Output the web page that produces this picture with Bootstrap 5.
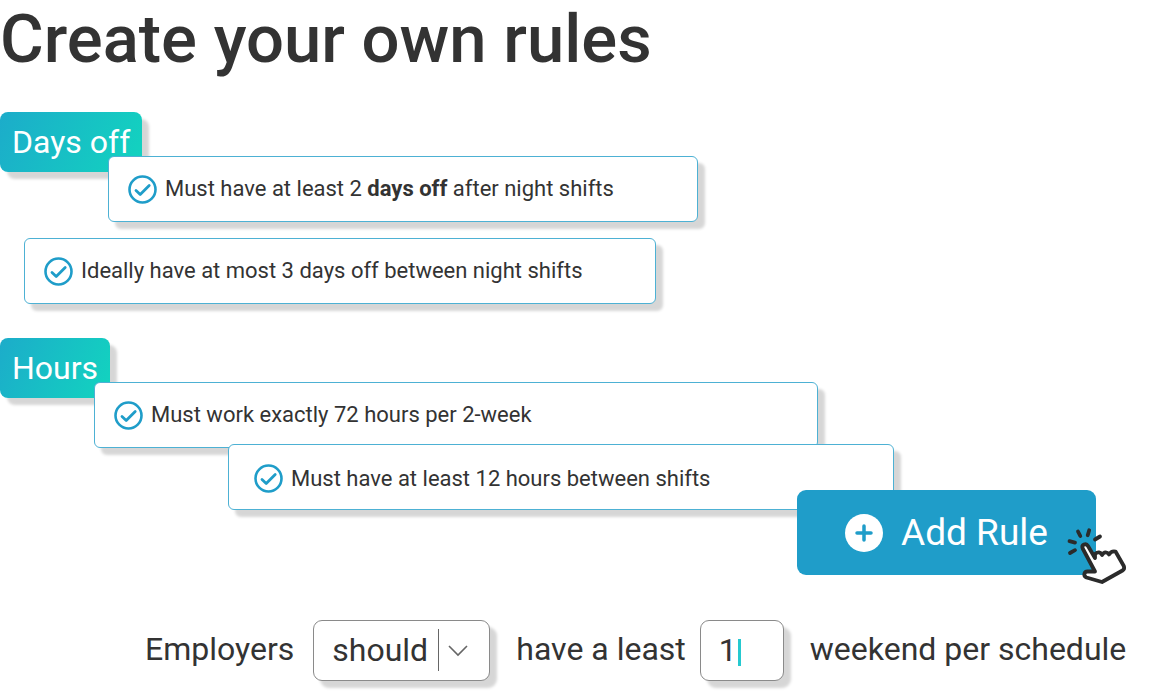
<!DOCTYPE html>
<html lang="en">
<head>
<meta charset="utf-8">
<meta name="viewport" content="width=device-width, initial-scale=1">
<title>Create your own rules</title>
<link href="https://cdn.jsdelivr.net/npm/bootstrap@5.3.0/dist/css/bootstrap.min.css" rel="stylesheet">
<style>
  :root { --ink: #333; --brand: #1f9dc9; --drop: 7px 7px 3px rgba(0, 0, 0, .16); }
  body { font-family: Roboto, "Liberation Sans", sans-serif; color: var(--ink); background: #fff; }
  h1 { font-size: 67px; line-height: 78px; font-weight: 500; margin-bottom: 34px; }
  .rule-group { margin-bottom: 34px; }
  .group-tag { font-size: 32px; line-height: 60px; height: 60px; font-weight: 400; padding: 0 12px; border-radius: 8px; color: #fff;
    background: linear-gradient(115deg, #1cacca, #12d4bf); box-shadow: var(--drop); }
  .rule-card { position: relative; width: 100%; height: 66px; padding: 0 19px; gap: 8px; border: 1px solid #4db1d4; border-radius: 6px;
    background: #fff; box-shadow: var(--drop); font-size: 22px; line-height: 32px; }
  .rule-card svg { flex: none; width: 29px; height: 29px; }
  .tucked { margin-top: -16px; }
  .rule-a { margin-left: 108px; max-width: 590px; }
  .rule-b { margin: 16px 0 0 24px; max-width: 632px; }
  .rule-c { margin-left: 94px; max-width: 724px; }
  .rule-d { margin: -4px 0 0 228px; max-width: 666px; padding: 3px 25px 0; }
  .add-wrap { margin: -20px 65px 0 auto; width: 299px; position: relative; }
  .add-btn, .add-btn:hover { width: 100%; height: 85px; border: 0; border-radius: 9px; background: var(--brand); color: #fff; font-size: 37px; line-height: 48px; font-weight: 400; gap: 18px; }
  .pointer { position: absolute; right: -32px; top: 37px; width: 62px; height: 58px; pointer-events: none; }
  .sentence { margin: 45px 0 11px 145px; font-size: 32px; line-height: 40px; }
  .sentence-text { padding-bottom: 4px; }
  .first-text { margin-right: 19px; }
  .second-text { margin-right: 14px; }
  .field-wrap { position: relative; margin-right: 26px; }
  .field-box { height: 61px; border: 1px solid #8a8a8a; border-radius: 9px; background: #fff; color: var(--ink); box-shadow: var(--drop); appearance: none; padding: 0 18px 2px; }
  .verb { width: 177px; }
  .amount { width: 84px; }
  .verb-arrow { position: absolute; right: 20px; top: 9px; pointer-events: none; }
  .caret { position: absolute; left: 38px; top: 19px; width: 3px; height: 27px; background: #25c9d0; }
</style>
</head>
<body>
<svg class="d-none" xmlns="http://www.w3.org/2000/svg">
  <symbol id="tick" viewBox="0 0 29 29"><g fill="none" stroke="#1f9dc9"><circle cx="14.500" cy="14.500" r="13" stroke-width="2.600"/><path d="M8 15.500l4.200 4 9-9" stroke-width="2.800" stroke-linecap="round" stroke-linejoin="round"/></g></symbol>
</svg>
<main>
  <h1>Create your own rules</h1>
  <section class="rule-group">
    <h2 class="group-tag d-inline-block mb-0 align-top">Days off</h2>
    <div class="rule-card rule-a tucked d-flex align-items-center"><svg aria-hidden="true"><use href="#tick"/></svg><span>Must have at least 2 <b>days off</b> after night shifts</span></div>
    <div class="rule-card rule-b d-flex align-items-center"><svg aria-hidden="true"><use href="#tick"/></svg><span>Ideally have at most 3 days off between night shifts</span></div>
  </section>
  <section>
    <h2 class="group-tag d-inline-block mb-0 align-top">Hours</h2>
    <div class="rule-card rule-c tucked d-flex align-items-center"><svg aria-hidden="true"><use href="#tick"/></svg><span>Must work exactly 72 hours per 2-week</span></div>
    <div class="rule-card rule-d d-flex align-items-center"><svg aria-hidden="true"><use href="#tick"/></svg><span>Must have at least 12 hours between shifts</span></div>
  </section>
  <div class="add-wrap">
    <button type="button" class="btn add-btn d-flex align-items-center justify-content-center">
      <svg width="38" height="38" viewBox="0 0 38 38" aria-hidden="true"><circle cx="19" cy="19" r="19" fill="#fff"/><path d="M19 12v14M12 19h14" stroke="#1f9dc9" stroke-width="3.500" stroke-linecap="round"/></svg>
      Add Rule
    </button>
    <svg class="pointer" viewBox="0 0 62 58" fill="none" stroke="#2b2b2b" stroke-linecap="round" stroke-linejoin="round" aria-hidden="true">
      <path d="M12 4.500l2.300 4.500M23.200 3.200l-1.500 5M34 9.500l-5 3M3.500 14.200l5.500 1.400M4 26l5-2.800" stroke-width="3.800"/>
      <path d="M16.700 21.500C15.200 17.800 20 15.600 22 19L29 31V27C32 24.500 34.500 25 36 28C38 24.500 41 24.500 43 27.500C44.500 25 47 24 49.500 24.500L57.800 39Q59 42 56.500 43.500L36 55L20.500 50.500C17 49 18 44.500 21.500 44.500H29Z" fill="#fff" stroke-width="3.800"/>
    </svg>
  </div>
  <form class="sentence d-flex flex-wrap align-items-center">
    <label for="verb" class="sentence-text first-text">Employers</label>
    <div class="field-wrap">
      <select id="verb" class="field-box verb"><option>should</option><option>must</option></select>
      <svg class="verb-arrow" width="34" height="42" viewBox="0 0 34 42" fill="none" stroke="#666" aria-hidden="true"><path d="M2.500 0v42"/><path d="M13 17l9 9 9-9" stroke-width="1.600"/></svg>
    </div>
    <label for="amount" class="sentence-text second-text">have a least</label>
    <div class="field-wrap">
      <input id="amount" class="field-box amount" type="text" value="1">
      <span class="caret"></span>
    </div>
    <span class="sentence-text">weekend per schedule</span>
  </form>
</main>
<script src="https://cdn.jsdelivr.net/npm/bootstrap@5.3.0/dist/js/bootstrap.bundle.min.js"></script>
</body>
</html>
